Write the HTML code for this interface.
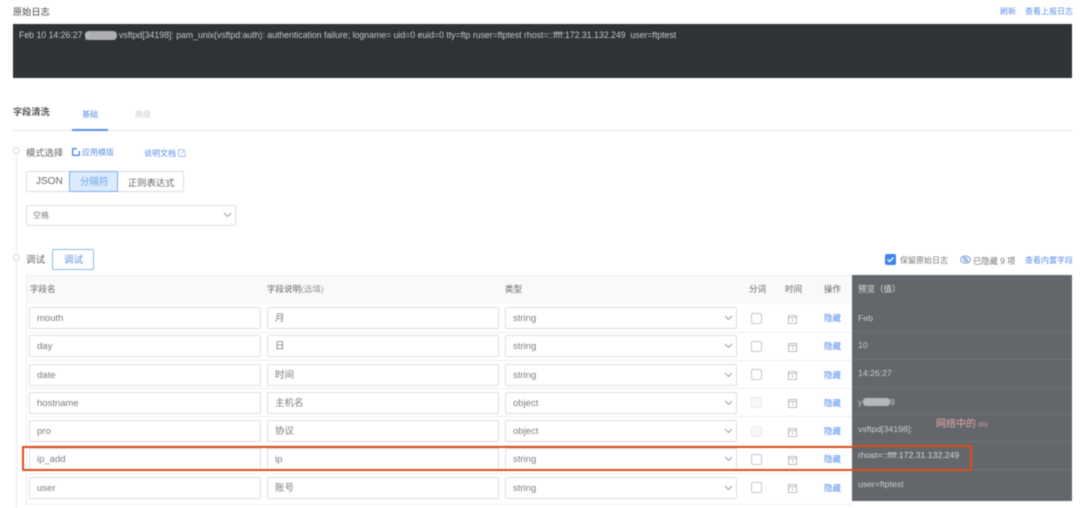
<!DOCTYPE html>
<html><head><meta charset="utf-8">
<style>
html,body{margin:0;padding:0;background:#fff}
#p{position:relative;width:1080px;height:508px;overflow:hidden;background:#fff;font-family:"Liberation Sans","Noto Sans CJK SC",sans-serif;filter:blur(.45px);color:#666}
#p div,#p span.a,#p svg{position:absolute}
.t{white-space:nowrap;line-height:14px}
.b{color:#5a8fe8}
.i{box-sizing:border-box;height:22px;border:1px solid #dcdfe3;border-radius:2px;background:#fff;font-size:9.5px;line-height:21.5px;padding-left:7px;color:#7c7c7c}
.n{left:29px;width:232px}
.d{left:267px;width:232px}
.s{left:505px;width:232px}
.c{left:751px;width:11px;height:11px;box-sizing:border-box;border:1px solid #c4c8cd;border-radius:2px;background:#fff}
.c.x{border-color:#e8eaec;background:#f6f7f8}
.h{left:824px;font-size:8.5px;color:#4d86ee;white-space:nowrap;line-height:12px}
.l{left:29px;width:823px;height:1px;background:#eceef0}
.v{left:858px;font-size:8.7px;color:#c9cbce;white-space:nowrap;line-height:12px}
.pl{left:852px;width:220px;height:1px;background:#6f7277}
.th{font-size:8.5px;color:#666;white-space:nowrap;line-height:12px;top:283px}
</style></head><body><div id="p">

<div class="t" style="left:13px;top:5px;font-size:9.2px;color:#444">原始日志</div>
<div class="t b" style="left:1000px;top:5px;font-size:8px">刷新</div>
<div class="t b" style="left:1025px;top:5px;font-size:8px">查看上报日志</div>
<div style="left:13px;top:24px;width:1059px;height:54px;background:#2f3237"></div>
<div style="left:85px;top:31px;width:32px;height:9px;background:#aeafb1;border-radius:4px"></div>
<div class="t" style="left:19px;top:28px;font-size:8.72px;color:#c6c8cb">Feb 10 14:26:27 y</div>
<div class="t" style="left:119px;top:28px;font-size:8.72px;color:#c6c8cb">vsftpd[34198]: pam_unix(vsftpd:auth): authentication failure; logname= uid=0 euid=0 tty=ftp ruser=ftptest rhost=::ffff:172.31.132.249&nbsp; user=ftptest</div>

<div class="t" style="left:13px;top:105px;font-size:9.2px;font-weight:bold;color:#555">字段清洗</div>
<div class="t" style="left:82px;top:108px;font-size:8px;color:#5a8fe8">基础</div>
<div class="t" style="left:135px;top:108px;font-size:8px;color:#c8cace">高级</div>
<div style="left:13px;top:130px;width:1059px;height:1px;background:#e6e8ea"></div>
<div style="left:72px;top:129px;width:36px;height:2px;background:#5a8fe8"></div>

<div style="left:16px;top:155px;width:1px;height:353px;background:#e8eaec"></div>
<div style="left:13px;top:147px;width:7px;height:7px;box-sizing:border-box;border:1px solid #d5d7da;border-radius:50%;background:#fff"></div>
<div class="t" style="left:26px;top:146px;font-size:9.3px;color:#666">模式选择</div>
<svg style="left:72px;top:148px" width="8" height="8" viewBox="0 0 8 8"><path d="M5 .7H.7v6.6h6.6V3" fill="none" stroke="#4d86ee" stroke-width="1.3"/></svg>
<div class="t b" style="left:82px;top:146px;font-size:8px">应用模版</div>
<div class="t b" style="left:144px;top:147px;font-size:8px">说明文档</div>
<svg style="left:178px;top:149px" width="8" height="8" viewBox="0 0 8 8"><path d="M6 .7H.7v6.6h6.6V3M3.5 4.5L7.3.7" fill="none" stroke="#8fb2ee" stroke-width=".8"/></svg>

<div style="left:26px;top:171px;width:158px;height:21px;box-sizing:border-box;border:1px solid #dcdfe3;border-radius:2px;background:#fff"></div>
<div style="left:69px;top:171px;width:49px;height:21px;box-sizing:border-box;border:1px solid #7fb0ef;background:#dcebfd"></div>
<div class="t" style="left:36px;top:175px;font-size:10px;color:#666">JSON</div>
<div class="t" style="left:80px;top:176px;font-size:9.5px;color:#6f9fe6">分隔符</div>
<div class="t" style="left:128px;top:176px;font-size:9.3px;color:#666">正则表达式</div>

<div class="i" style="left:26px;top:205px;width:210px;height:21px;font-size:8px;padding-left:6px;line-height:20px">空格</div>
<svg style="left:223px;top:212px" width="9" height="6" viewBox="0 0 9 6"><path d="M1 1l3.5 3.5L8 1" fill="none" stroke="#999" stroke-width=".9"/></svg>

<div style="left:13px;top:254px;width:7px;height:7px;box-sizing:border-box;border:1px solid #d5d7da;border-radius:50%;background:#fff"></div>
<div class="t" style="left:26px;top:254px;font-size:9.5px;color:#666">调试</div>
<div style="left:52px;top:249px;width:42px;height:21px;box-sizing:border-box;border:1px solid #8fb8ef;border-radius:2px;background:#fff"></div>
<div class="t" style="left:64px;top:254px;font-size:9.5px;color:#5a8fe8">调试</div>

<div style="left:885px;top:254px;width:11px;height:11px;background:#3f83ec;border-radius:2px"></div>
<svg style="left:885px;top:254px" width="11" height="11" viewBox="0 0 11 11"><path d="M2.5 5.5l2 2 4-4" fill="none" stroke="#fff" stroke-width="1.3"/></svg>
<div class="t" style="left:900px;top:254px;font-size:8px;color:#777">保留原始日志</div>
<svg style="left:960px;top:255px" width="11" height="9" viewBox="0 0 11 9"><ellipse cx="5.5" cy="4.5" rx="4.8" ry="3.6" fill="none" stroke="#6d94d6" stroke-width=".9"/><circle cx="5.5" cy="4.5" r="1.8" fill="none" stroke="#6d94d6" stroke-width=".8"/><path d="M2 1l7 7" stroke="#6d94d6" stroke-width=".8"/></svg>
<div class="t" style="left:973px;top:254px;font-size:8.3px;color:#777">已隐藏 9 项</div>
<div class="t b" style="left:1025px;top:254px;font-size:8px">查看内置字段</div>

<div style="left:26px;top:275px;width:826px;height:230px;box-sizing:border-box;border:1px solid #eceef0;border-right:0;background:#fff"></div>
<div style="left:27px;top:276px;width:825px;height:28px;background:#f7f9fb"></div>
<div class="th" style="left:30px">字段名</div>
<div class="th" style="left:267px">字段说明<span style="color:#999">(选填)</span></div>
<div class="th" style="left:505px">类型</div>
<div class="th" style="left:749px">分词</div>
<div class="th" style="left:785px">时间</div>
<div class="th" style="left:824px">操作</div>

<div class="l" style="top:332px"></div><div class="l" style="top:360px"></div><div class="l" style="top:388px"></div><div class="l" style="top:416px"></div><div class="l" style="top:445px"></div><div class="l" style="top:473px"></div>

<div class="i n" style="top:307px">mouth</div><div class="i d" style="top:307px">月</div><div class="i s" style="top:307px">string</div>
<div class="i n" style="top:335px">day</div><div class="i d" style="top:335px">日</div><div class="i s" style="top:335px">string</div>
<div class="i n" style="top:364px">date</div><div class="i d" style="top:364px">时间</div><div class="i s" style="top:364px">string</div>
<div class="i n" style="top:392px">hostname</div><div class="i d" style="top:392px">主机名</div><div class="i s" style="top:392px">object</div>
<div class="i n" style="top:420px">pro</div><div class="i d" style="top:420px">协议</div><div class="i s" style="top:420px">object</div>
<div class="i n" style="top:448px">ip_add</div><div class="i d" style="top:448px">ip</div><div class="i s" style="top:448px">string</div>
<div class="i n" style="top:477px">user</div><div class="i d" style="top:477px">账号</div><div class="i s" style="top:477px">string</div>

<svg style="left:724px;top:315px" width="9" height="6" viewBox="0 0 9 6"><path d="M1 1l3.5 3.5L8 1" fill="none" stroke="#999" stroke-width=".9"/></svg>
<svg style="left:724px;top:343px" width="9" height="6" viewBox="0 0 9 6"><path d="M1 1l3.5 3.5L8 1" fill="none" stroke="#999" stroke-width=".9"/></svg>
<svg style="left:724px;top:372px" width="9" height="6" viewBox="0 0 9 6"><path d="M1 1l3.5 3.5L8 1" fill="none" stroke="#999" stroke-width=".9"/></svg>
<svg style="left:724px;top:400px" width="9" height="6" viewBox="0 0 9 6"><path d="M1 1l3.5 3.5L8 1" fill="none" stroke="#999" stroke-width=".9"/></svg>
<svg style="left:724px;top:428px" width="9" height="6" viewBox="0 0 9 6"><path d="M1 1l3.5 3.5L8 1" fill="none" stroke="#999" stroke-width=".9"/></svg>
<svg style="left:724px;top:456px" width="9" height="6" viewBox="0 0 9 6"><path d="M1 1l3.5 3.5L8 1" fill="none" stroke="#999" stroke-width=".9"/></svg>
<svg style="left:724px;top:485px" width="9" height="6" viewBox="0 0 9 6"><path d="M1 1l3.5 3.5L8 1" fill="none" stroke="#999" stroke-width=".9"/></svg>

<div class="c" style="top:313px"></div><div class="c" style="top:341px"></div><div class="c" style="top:369px"></div><div class="c x" style="top:397px"></div><div class="c x" style="top:426px"></div><div class="c" style="top:454px"></div><div class="c" style="top:482px"></div>

<svg style="left:788px;top:314px" width="9" height="10" viewBox="0 0 9 10"><path d="M.5 1.5h8v8h-8zM.5 3.5h8M4.5 5v2.5" fill="none" stroke="#aaa" stroke-width=".8"/></svg>
<svg style="left:788px;top:342px" width="9" height="10" viewBox="0 0 9 10"><path d="M.5 1.5h8v8h-8zM.5 3.5h8M4.5 5v2.5" fill="none" stroke="#aaa" stroke-width=".8"/></svg>
<svg style="left:788px;top:370px" width="9" height="10" viewBox="0 0 9 10"><path d="M.5 1.5h8v8h-8zM.5 3.5h8M4.5 5v2.5" fill="none" stroke="#aaa" stroke-width=".8"/></svg>
<svg style="left:788px;top:398px" width="9" height="10" viewBox="0 0 9 10"><path d="M.5 1.5h8v8h-8zM.5 3.5h8M4.5 5v2.5" fill="none" stroke="#aaa" stroke-width=".8"/></svg>
<svg style="left:788px;top:427px" width="9" height="10" viewBox="0 0 9 10"><path d="M.5 1.5h8v8h-8zM.5 3.5h8M4.5 5v2.5" fill="none" stroke="#aaa" stroke-width=".8"/></svg>
<svg style="left:788px;top:455px" width="9" height="10" viewBox="0 0 9 10"><path d="M.5 1.5h8v8h-8zM.5 3.5h8M4.5 5v2.5" fill="none" stroke="#aaa" stroke-width=".8"/></svg>
<svg style="left:788px;top:483px" width="9" height="10" viewBox="0 0 9 10"><path d="M.5 1.5h8v8h-8zM.5 3.5h8M4.5 5v2.5" fill="none" stroke="#aaa" stroke-width=".8"/></svg>

<div class="h" style="top:312px">隐藏</div><div class="h" style="top:340px">隐藏</div><div class="h" style="top:369px">隐藏</div><div class="h" style="top:397px">隐藏</div><div class="h" style="top:425px">隐藏</div><div class="h" style="top:453px">隐藏</div><div class="h" style="top:482px">隐藏</div>

<div style="left:852px;top:275px;width:220px;height:226px;background:#63666b"></div>
<div class="pl" style="top:331px"></div><div class="pl" style="top:359px"></div><div class="pl" style="top:387px"></div><div class="pl" style="top:414px"></div><div class="pl" style="top:441px"></div><div class="pl" style="top:469px"></div>
<div class="v" style="top:283px;font-size:8.5px;color:#e0e1e3">预览（值）</div>
<div class="v" style="top:312px">Feb</div>
<div class="v" style="top:339px">10</div>
<div class="v" style="top:367px">14:26:27</div>
<div class="v" style="top:396px">y</div>
<div style="left:863px;top:398px;width:27px;height:8px;background:#b5b6b8;border-radius:3px"></div>
<div class="v" style="left:890px;top:396px">9</div>
<div class="v" style="top:423px">vsftpd[34198]:</div>
<div class="v" style="top:449px;color:#d5d6d8">rhost=::ffff:172.31.132.249</div>
<div class="v" style="top:478px">user=ftptest</div>
<div class="t" style="left:936px;top:418px;font-size:10px;color:#e9a6a6">网络中的</div>
<div style="left:978px;top:422px;width:10px;height:5px;background:#8d7a80;border-radius:2px"></div>

<div style="left:22px;top:445.500px;width:830px;height:25.500px;box-sizing:border-box;border:2.500px solid #dc4f1a;border-right:0;border-radius:1px"></div>
<div style="left:852px;top:445px;width:120px;height:26px;box-sizing:border-box;border:2.500px solid #dc4f1a;border-left:0;border-radius:1px"></div>

</div></body></html>
